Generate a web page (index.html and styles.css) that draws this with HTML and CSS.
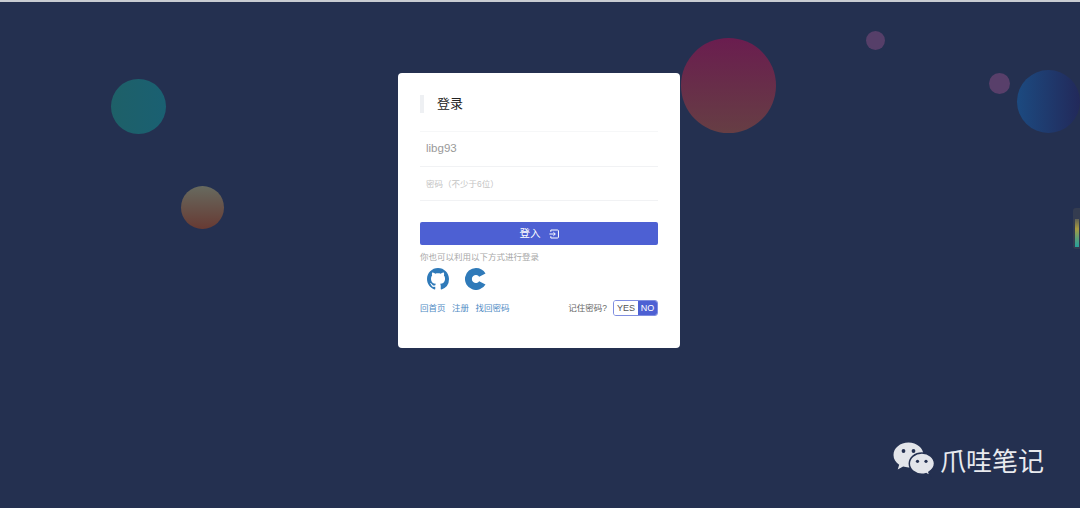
FILE: index.html
```html
<!DOCTYPE html>
<html lang="zh-CN">
<head>
    <meta charset="UTF-8">
    <meta name="viewport" content="width=device-width, initial-scale=1.0">
    <title>登录</title>
    <link rel="stylesheet" href="styles.css">
</head>
<body>
    <div class="bubble bubble-teal"></div>
    <div class="bubble bubble-orange"></div>
    <div class="bubble bubble-red"></div>
    <div class="bubble bubble-dot-a"></div>
    <div class="bubble bubble-dot-b"></div>
    <div class="bubble bubble-blue"></div>

    <div class="side-widget"><div class="side-meter"></div></div>

    <div class="login-card">
        <h2 class="login-title">登录</h2>
        <div class="field field-first"><span class="field-value">libg93</span></div>
        <div class="field"><span class="field-hint">密码（不少于6位）</span></div>

        <button class="login-btn" type="button">
            <span class="login-btn-text">登入</span>
            <svg class="login-btn-icon" viewBox="0 0 11 10" width="10" height="10">
                <path d="M2 0.6H9.400Q10.400 0.600 10.400 1.600V8.400Q10.400 9.400 9.400 9.400H2V7.400" fill="none" stroke="#fff" stroke-width="1.100"/>
                <path d="M2 2.600V0.600M0.400 5H6.800M4.800 3L6.900 5L4.800 7" fill="none" stroke="#fff" stroke-width="1.100"/>
            </svg>
        </button>

        <p class="other-tip">你也可以利用以下方式进行登录</p>
        <div class="other-icons">
            <svg class="other-icon" viewBox="0 0 16 16" width="22" height="22">
                <path fill="#2f7ab9" d="M8 0C3.58 0 0 3.58 0 8c0 3.54 2.29 6.53 5.47 7.59.4.07.55-.17.55-.38 0-.19-.01-.82-.01-1.49-2.01.37-2.53-.49-2.69-.94-.09-.23-.48-.94-.82-1.13-.28-.15-.68-.52-.01-.53.63-.01 1.08.58 1.23.82.72 1.21 1.87.87 2.33.66.07-.52.28-.87.51-1.07-1.78-.2-3.64-.89-3.64-3.95 0-.87.31-1.59.82-2.15-.08-.2-.36-1.02.08-2.12 0 0 .67-.21 2.2.82.64-.18 1.32-.27 2-.27s1.36.09 2 .27c1.53-1.04 2.2-.82 2.2-.82.44 1.1.16 1.92.08 2.12.51.56.82 1.27.82 2.15 0 3.07-1.87 3.75-3.65 3.95.29.25.54.73.54 1.48 0 1.07-.01 1.93-.01 2.2 0 .21.15.46.55.38A8.01 8.01 0 0 0 16 8c0-4.42-3.58-8-8-8z"/>
            </svg>
            <svg class="other-icon" viewBox="0 0 22 22" width="22" height="22">
                <path fill="#2f7ab9" d="M11 0A11 11 0 1 0 20.500 16.500L14.200 13.200A4 4 0 1 1 14.200 8.800L20.500 5.500A11 11 0 0 0 11 0Z"/>
            </svg>
        </div>

        <div class="login-foot">
            <div class="foot-links">
                <a href="#">回首页</a>
                <a href="#">注册</a>
                <a href="#">找回密码</a>
            </div>
            <div class="remember">
                <span class="remember-label">记住密码?</span>
                <div class="switch">
                    <span class="switch-yes">YES</span>
                    <span class="switch-no">NO</span>
                </div>
            </div>
        </div>
    </div>

    <div class="watermark">
        <svg class="watermark-logo" viewBox="0 0 42 36" width="42" height="36">
            <path fill="#e3e5ea" d="M15.500 0.500C7.200 0.500 0.500 6 0.500 13c0 4 2.200 7.400 5.700 9.700L4.700 27.500l5.400-2.900c1.700.5 3.500.8 5.400.8 8.300 0 15-5.500 15-12.400S23.800 0.500 15.500 0.500z"/>
            <circle cx="10.500" cy="9" r="1.900" fill="#243050"/>
            <circle cx="20.500" cy="9" r="1.900" fill="#243050"/>
            <path fill="#e3e5ea" stroke="#243050" stroke-width="1.500" d="M41.500 21.600c0-5.900-5.700-10.600-12.600-10.600-7 0-12.600 4.700-12.600 10.600s5.600 10.600 12.600 10.600c1.400 0 2.800-.2 4.100-.6l4 2.300-1.100-3.700C39.300 28 41.500 25 41.500 21.600z"/>
            <circle cx="24.500" cy="19.300" r="1.600" fill="#243050"/>
            <circle cx="33" cy="19.300" r="1.600" fill="#243050"/>
        </svg>
        <span>爪哇笔记</span>
    </div>
</body>
</html>
```

FILE: styles.css
```css
* {
    box-sizing: border-box;
}
html, body {
    height: 100%;
}
body {
    margin: 0;
    overflow: hidden;
    position: relative;
    padding-top: 73px;
    background-color: #243050;
    border-top: 2px solid #c9ccd2;
    font-family: "Liberation Sans", "Noto Sans CJK SC", sans-serif;
    color: #333;
}
.bubble {
    position: absolute;
    border-radius: 50%;
}
.bubble-teal {
    left: 111px;
    top: 77px;
    width: 55px;
    height: 55px;
    background: linear-gradient(to right, #1e6068, #1a6072);
}
.bubble-orange {
    left: 181px;
    top: 184px;
    width: 43px;
    height: 43px;
    background: linear-gradient(to bottom, #676a5f, #673a33);
}
.bubble-red {
    left: 681px;
    top: 36px;
    width: 95px;
    height: 95px;
    background: linear-gradient(to bottom, #6a1d4f, #663e44);
}
.bubble-dot-a {
    left: 866px;
    top: 29px;
    width: 19px;
    height: 19px;
    background-color: #563f69;
}
.bubble-dot-b {
    left: 989px;
    top: 71px;
    width: 21px;
    height: 21px;
    background-color: #583f6a;
}
.bubble-blue {
    left: 1017px;
    top: 68px;
    width: 63px;
    height: 63px;
    background: linear-gradient(to right, #1c4a80, #22295a);
}
.side-widget {
    position: absolute;
    right: 0;
    top: 206px;
    width: 7px;
    height: 41px;
    padding: 11px 1px 2px 2px;
    background-color: #343c50;
    border-radius: 3px 0 0 3px;
}
.side-meter {
    height: 100%;
    background: linear-gradient(to bottom, #5f6054, #a89a40 35%, #5a9e78 70%, #25a09c);
}
.login-card {
    width: 282px;
    height: 275px;
    margin-left: 398px;
    margin-top: -2px;
    padding: 22px 22px 0;
    position: relative;
    background-color: #fff;
    border-radius: 4px;
}
.login-title {
    margin: 0;
    height: 18px;
    line-height: 18px;
    padding-left: 13px;
    border-left: 4px solid #eef0f3;
    font-size: 13px;
    font-weight: normal;
    color: #222;
}
.field {
    height: 34px;
    padding: 0 0 2px 6px;
    display: flex;
    align-items: center;
    border-bottom: 1px solid #f1f2f4;
}
.field-first {
    height: 36px;
    margin-top: 18px;
    border-top: 1px solid #f6f7f8;
}
.field-value {
    font-size: 11.5px;
    color: #999;
}
.field-hint {
    font-size: 8.5px;
    color: #c4c4c4;
}
.login-btn {
    width: 238px;
    height: 23px;
    margin-top: 21px;
    display: flex;
    align-items: center;
    justify-content: center;
    gap: 8px;
    border: 0;
    border-radius: 2px;
    background-color: #4d60d3;
    font-family: inherit;
    font-size: 10.5px;
    color: #fff;
}
.login-btn-text {
    padding-bottom: 2px;
}
.other-tip {
    margin: 6px 0 0;
    font-size: 8.5px;
    line-height: 13px;
    color: #a8a8a8;
}
.other-icons {
    display: flex;
    gap: 16px;
    margin-top: 4px;
    padding-left: 7px;
}
.login-foot {
    margin-top: 10px;
    display: flex;
    align-items: center;
    justify-content: space-between;
}
.foot-links {
    display: flex;
    gap: 6.5px;
    font-size: 8.5px;
    padding-bottom: 2px;
}
.foot-links a {
    color: #4f8bc4;
    text-decoration: none;
}
.remember {
    display: flex;
    align-items: center;
    gap: 6px;
    font-size: 8.5px;
    color: #666;
}
.remember-label {
    padding-bottom: 2px;
}
.switch {
    display: flex;
    height: 16px;
    border: 1px solid #7f8ee0;
    border-radius: 3px;
    overflow: hidden;
    line-height: 14px;
    font-size: 9px;
}
.switch-yes {
    width: 24px;
    text-align: center;
    color: #555;
    background-color: #fff;
}
.switch-no {
    width: 19px;
    text-align: center;
    color: #fff;
    background-color: #4d60d3;
}
.watermark {
    position: absolute;
    left: 893px;
    top: 439px;
    display: flex;
    align-items: center;
    gap: 5px;
    font-size: 26px;
    color: #e8eaee;
}
```
